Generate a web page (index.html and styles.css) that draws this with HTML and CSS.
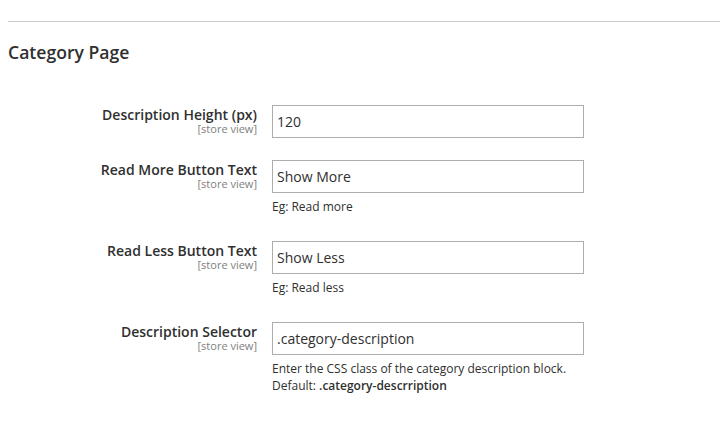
FILE: index.html
```html
<!DOCTYPE html>
<html>
<head>
<meta charset="utf-8">
<link rel="stylesheet" href="styles.css">
</head>
<body>
<div class="page">
  <div class="rule"></div>
  <h2 class="title">Category Page</h2>
  <div class="fields">
    <div class="row">
      <div class="label"><span class="name">Description Height (px)</span><span class="scope">[store view]</span></div>
      <div class="control"><input class="text" type="text" value="120"></div>
    </div>
    <div class="row">
      <div class="label"><span class="name">Read More Button Text</span><span class="scope">[store view]</span></div>
      <div class="control"><input class="text" type="text" value="Show More"><div class="note">Eg: Read more</div></div>
    </div>
    <div class="row">
      <div class="label"><span class="name">Read Less Button Text</span><span class="scope">[store view]</span></div>
      <div class="control"><input class="text" type="text" value="Show Less"><div class="note">Eg: Read less</div></div>
    </div>
    <div class="row">
      <div class="label"><span class="name">Description Selector</span><span class="scope">[store view]</span></div>
      <div class="control"><input class="text" type="text" value=".category-description"><div class="note">Enter the CSS class of the category description block.<br>Default: <strong>.category-descrription</strong></div></div>
    </div>
  </div>
</div>
</body>
</html>
```
FILE: styles.css
```css
html, body {
  margin: 0;
  padding: 0;
  background: #ffffff;
}
body {
  font-family: "Open Sans", "Liberation Sans", sans-serif;
  color: #303030;
}
.page {
  padding-left: 8px;
}
.rule {
  height: 0;
  border-top: 1px solid #cccccc;
  margin-top: 21px;
}
.title {
  margin: 19px 0 0;
  font-size: 17.6px;
  line-height: 23px;
  font-weight: 600;
  color: #303030;
}
.fields {
  margin-top: 41px;
  display: flex;
  flex-direction: column;
  gap: 22px;
}
.row {
  display: grid;
  grid-template-columns: 249px 312px;
  column-gap: 15px;
  align-items: start;
}
.label {
  display: flex;
  flex-direction: column;
  align-items: flex-end;
  text-align: right;
  padding-top: 4px;
}
.name {
  font-size: 14px;
  line-height: 12px;
  font-weight: 600;
  color: #303030;
  white-space: nowrap;
}
.scope {
  font-size: 11px;
  line-height: 16px;
  color: #808080;
  white-space: nowrap;
}
.control {
  display: flex;
  flex-direction: column;
}
.text {
  box-sizing: border-box;
  width: 312px;
  height: 33px;
  margin: 0;
  border: 1px solid #adadad;
  border-radius: 0;
  padding: 0 4px;
  font-family: "Open Sans", "Liberation Sans", sans-serif;
  font-size: 14px;
  color: #303030;
  background: #ffffff;
  outline: none;
}
.note {
  margin: 5px 0 4px;
  font-size: 12px;
  line-height: 17px;
  color: #303030;
}
.note strong {
  font-weight: 600;
}
```
